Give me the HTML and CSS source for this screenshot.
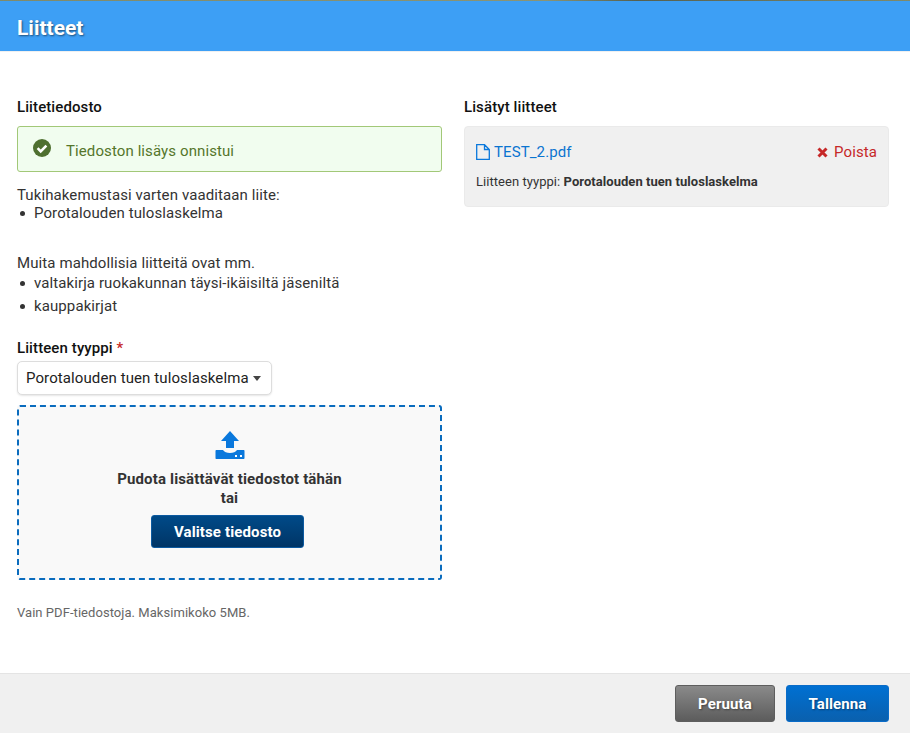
FILE: index.html
```html
<!DOCTYPE html>
<html lang="fi">
<head>
<meta charset="utf-8">
<title>Liitteet</title>
<link rel="stylesheet" href="styles.css">
</head>
<body>
<div class="modal">
  <div class="strip"></div>
  <header class="head"><h1>Liitteet</h1></header>
  <main class="content">
    <section class="col">
      <h2 class="sub">Liitetiedosto</h2>
      <div class="alert">
        <svg class="ok" width="18" height="18" viewBox="0 0 18 18"><circle cx="9" cy="9" r="9" fill="#4f7030"/><path d="M4.600 9.200l3.100 3.100 5.700-5.700" fill="none" stroke="#fff" stroke-width="2.600"/></svg>
        <span class="alert-text">Tiedoston lisäys onnistui</span>
      </div>
      <p class="req">Tukihakemustasi varten vaaditaan liite:</p>
      <ul class="list first"><li>Porotalouden tuloslaskelma</li></ul>
      <p class="other">Muita mahdollisia liitteitä ovat mm.</p>
      <ul class="list second"><li>valtakirja ruokakunnan täysi-ikäisiltä jäseniltä</li><li>kauppakirjat</li></ul>
      <label class="type-label">Liitteen tyyppi <span class="star">*</span></label>
      <div class="select">Porotalouden tuen tuloslaskelma<span class="caret"></span></div>
      <div class="drop">
        <svg class="upload" width="30" height="28" viewBox="0 0 30 28"><path d="M15 0l9 10h-5v7h-8v-7H6z" fill="#0a78dc"/><path d="M1.500 19H8c1.200 2 3.800 3 7 3s5.800-1 7-3h6.500c.7 0 1 .4 1 1v7c0 .7-.4 1-1 1h-27c-.7 0-1-.4-1-1v-7c0-.7.4-1 1-1z" fill="#0a78dc"/><rect x="20" y="24" width="2" height="2" fill="#fff"/><rect x="25" y="24" width="2" height="2" fill="#fff"/></svg>
        <div class="drop-text">Pudota lisättävät tiedostot tähän<br>tai</div>
        <button class="pick">Valitse tiedosto</button>
      </div>
      <p class="hint">Vain PDF-tiedostoja. Maksimikoko 5MB.</p>
    </section>
    <section class="col">
      <h2 class="sub">Lisätyt liitteet</h2>
      <div class="card">
        <div class="card-top">
          <a class="file"><svg width="14" height="16" viewBox="0 0 14 16"><path d="M1.500.7h7l4.800 4.800v9.800H.7V.7zM8.500.7v4.800h4.800" fill="none" stroke="#0a78dc" stroke-width="1.300"/></svg>TEST_2.pdf</a>
          <a class="remove"><svg width="11" height="11" viewBox="0 0 11 11"><path d="M1.500 1.500l8 8M9.500 1.500l-8 8" stroke="#c62828" stroke-width="3"/></svg>Poista</a>
        </div>
        <div class="card-type">Liitteen tyyppi: <b>Porotalouden tuen tuloslaskelma</b></div>
      </div>
    </section>
  </main>
  <footer class="foot">
    <button class="btn cancel">Peruuta</button>
    <button class="btn save">Tallenna</button>
  </footer>
</div>
</body>
</html>
```
FILE: styles.css
```css
* { box-sizing: border-box; }
html, body { margin: 0; height: 100%; }
body { font-family: Roboto, "Liberation Sans", sans-serif; color: #333; font-size: 15px; letter-spacing: .1px; background: #fff; overflow: hidden; }
.modal { height: 733px; display: flex; flex-direction: column; }
.strip { height: 1px; background: linear-gradient(90deg, #7f8a6a, #8a9474 60%, #55604f 70%, #7f8a6a); }
.head { height: 51px; background: #3d9ff5; border-bottom: 1px solid #f0f0f0; padding: 3px 17px 0; display: flex; align-items: center; }
.head h1 { margin: 0; font-size: 21px; font-weight: 700; letter-spacing: 0; color: #fff; text-shadow: 1px 1px 2px rgba(0,0,0,.5); }
.content { flex: 1; display: flex; gap: 22px; padding: 46px 21px 0 17px; }
.col { width: 425px; }
.sub { margin: 0 0 10px; font-size: 15px; line-height: 18px; font-weight: 500; color: #111; }
.alert { height: 46px; border: 1px solid #a2c878; border-radius: 3px; background: #f1fdef; display: flex; align-items: flex-start; padding: 12px 15px 0; gap: 15px; color: #55762b; }
.alert-text { margin-top: 2px; line-height: 20px; }
.req, .other { margin: 0; line-height: 20px; }
.req { margin-top: 13px; }
.other { margin-top: 28px; }
.list { margin: 0; padding: 0 0 0 17px; list-style: none; }
.first { margin-top: -3px; }
.second { margin-top: -1px; }
.list li { line-height: 23px; position: relative; }
.list li::before { content: ""; position: absolute; left: -14px; top: 9px; width: 5px; height: 5px; border-radius: 50%; background: #333; }
.type-label { display: block; margin-top: 21px; font-weight: 500; line-height: 18px; color: #111; }
.star { color: #c62828; }
.select { width: 255px; height: 34px; margin-top: 4px; border: 1px solid #ddd; border-radius: 5px; box-shadow: 0 1px 2px rgba(0,0,0,.1); display: flex; align-items: center; padding-left: 8px; color: #222; background: #fff; }
.caret { margin-left: 4px; border: 4px solid transparent; border-top: 5px solid #444; border-bottom: 0; }
.drop { height: 175px; margin-top: 10px; border: 2px dashed #0a6cbe; border-radius: 3px; background: #f9f9f9; display: flex; flex-direction: column; align-items: center; padding-top: 24px; }
.drop-text { margin-top: 11px; font-weight: 700; text-align: center; line-height: 19px; letter-spacing: .15px; color: #333; }
.pick { margin: 7px 4px 0 0; width: 153px; height: 33px; border: 1px solid #0c5aa0; border-radius: 3px; background: linear-gradient(#004a88, #003566); color: #fff; font: 700 15px Roboto, sans-serif; letter-spacing: .13px; }
.hint { margin: 25px 0 0; font-size: 13px; line-height: 16px; letter-spacing: .05px; color: #666; }
.card { height: 81px; background: #f0f0f0; border: 1px solid #eaeaea; border-radius: 4px; padding: 15px 11px 0; }
.card-top { display: flex; justify-content: space-between; align-items: center; height: 20px; }
.file { color: #0a74d0; display: flex; align-items: center; gap: 4px; font-size: 15px; }
.remove { color: #c62828; display: flex; align-items: center; gap: 6px; font-size: 15px; }
.card-type { margin-top: 12px; font-size: 13px; line-height: 16px; letter-spacing: .05px; color: #333; }
.foot { height: 60px; background: #f0f0f0; border-top: 1px solid #e4e4e4; display: flex; justify-content: flex-end; gap: 11px; padding: 11px 21px 0 0; }
.btn { height: 37px; border-radius: 3px; color: #fff; font: 700 15px Roboto, sans-serif; text-shadow: 1px 1px 2px rgba(0,0,0,.4); letter-spacing: .1px; }
.cancel { width: 100px; border: 1px solid #5e5e5e; background: linear-gradient(#8a8a8a, #5c5c5c); }
.save { width: 103px; border: 1px solid #0a6cc8; background: linear-gradient(#0070d2, #0a60ae); }
```
